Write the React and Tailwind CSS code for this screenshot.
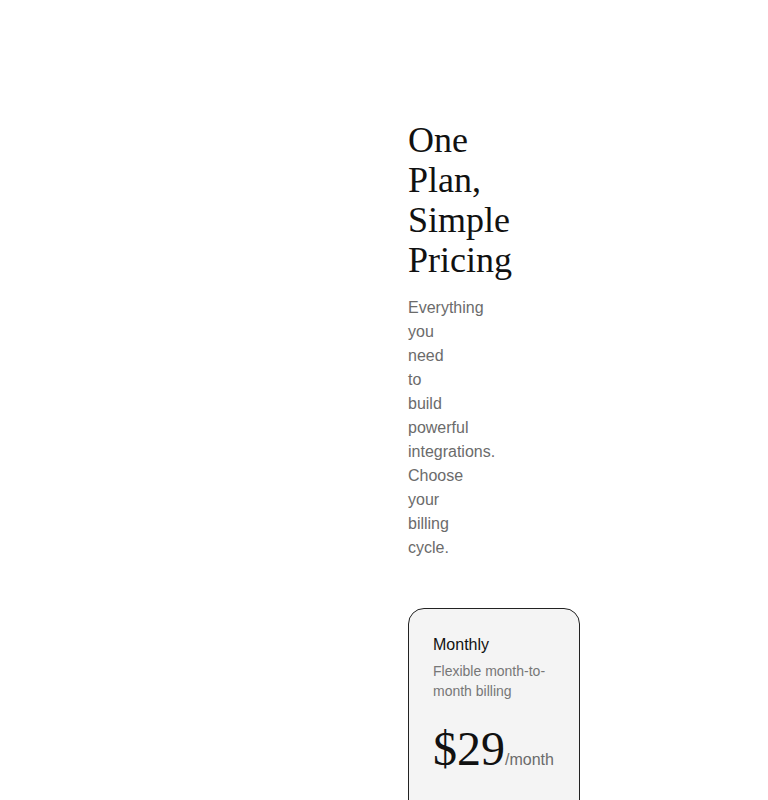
import React from "react";

const serif = { fontFamily: '"Liberation Serif", "Times New Roman", serif' };

const App = () => {
  return (
    <div
      className="min-h-screen bg-white px-6 pt-[120px] pb-24"
      style={{ fontFamily: '"Liberation Sans", Arial, sans-serif' }}
    >
      <div className="grid grid-cols-2 gap-12">
        <div />
        <div className="flex flex-col">
          <h1 className="w-0 text-4xl font-normal text-[#111]" style={serif}>
            One Plan, Simple Pricing
          </h1>
          <p className="mt-4 w-0 text-base text-[#6b6b6b]">
            Everything you need to build powerful integrations. Choose your billing cycle.
          </p>

          {/* plan card runs past the fold */}
          <div className="mt-12 min-h-[260px] w-[172px] rounded-2xl border border-[#222] bg-[#f4f4f4] p-6">
            <h3 className="text-base text-[#111]">Monthly</h3>
            <p className="mt-1 text-sm text-[#777]">Flexible month-to-month billing</p>
            <div className="mt-6 flex items-baseline">
              <span className="text-5xl leading-none text-[#111]" style={serif}>
                $29
              </span>
              <span className="text-base text-[#6b6b6b]">/month</span>
            </div>
          </div>
        </div>
      </div>
    </div>
  );
};

export default App;
